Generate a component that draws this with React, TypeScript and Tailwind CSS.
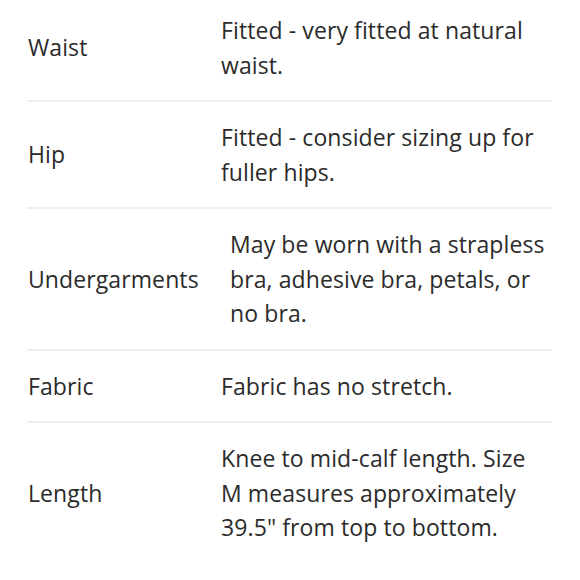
import React from "react";

const rows: { label: string; lines: string[]; pad: string }[] = [
  { label: "Waist", lines: ["Fitted - very fitted at natural", "waist."], pad: "pl-0" },
  { label: "Hip", lines: ["Fitted - consider sizing up for", "fuller hips."], pad: "pl-0" },
  {
    label: "Undergarments",
    lines: ["May be worn with a strapless", "bra, adhesive bra, petals, or", "no bra."],
    pad: "pl-[9px]",
  },
  { label: "Fabric", lines: ["Fabric has no stretch."], pad: "pl-0" },
  {
    label: "Length",
    lines: ["Knee to mid-calf length. Size", "M measures approximately", '39.5" from top to bottom.'],
    pad: "pl-0",
  },
];

export default function App() {
  return (
    <div
      className="w-[580px] h-[580px] overflow-hidden bg-white text-[#2b2b2b]"
      style={{ fontFamily: "'Open Sans', Lato, sans-serif" }}
    >
      <div className="mt-[-5px] pl-[27px] pr-[28px]">
        {rows.map((r, i) => (
          <div
            key={r.label}
            className={`flex items-center py-[18px] text-[23px] leading-[34.5px] tracking-[0.1px] ${
              i < rows.length - 1 ? "border-b-2 border-[#efefef]" : ""
            }`}
          >
            <div className="w-[194px] shrink-0 pl-[1px] whitespace-nowrap">{r.label}</div>
            <div className={`${r.pad} whitespace-nowrap`}>
              {r.lines.map((l) => (
                <div key={l}>{l}</div>
              ))}
            </div>
          </div>
        ))}
      </div>
    </div>
  );
}
